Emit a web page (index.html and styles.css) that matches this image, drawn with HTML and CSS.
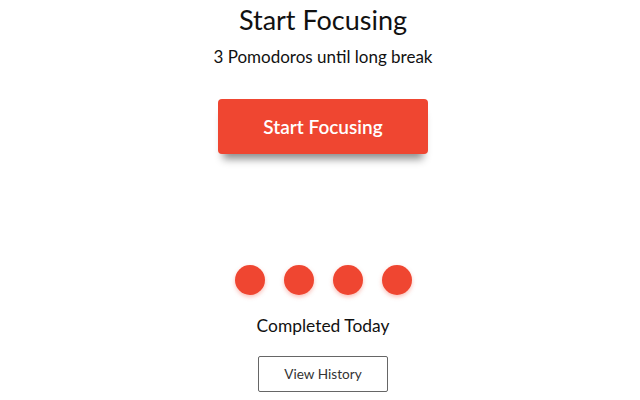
FILE: index.html
```html
<!DOCTYPE html>
<html>
<head>
<meta charset="utf-8">
<link rel="stylesheet" href="styles.css">
</head>
<body>
<main class="page">
  <h1 class="title">Start Focusing</h1>
  <p class="subtitle">3 Pomodoros until long break</p>
  <button class="primary">Start Focusing</button>
  <div class="dots">
    <span class="dot"></span>
    <span class="dot"></span>
    <span class="dot"></span>
    <span class="dot"></span>
  </div>
  <p class="completed">Completed Today</p>
  <button class="secondary">View History</button>
</main>
</body>
</html>
```
FILE: styles.css
```css
html, body {
  margin: 0;
  padding: 0;
  background: #fff;
}
body {
  font-family: "Lato", "Open Sans", sans-serif;
  color: #111;
}
.page {
  display: flex;
  flex-direction: column;
  align-items: center;
  width: 634px;
  height: 400px;
  padding-left: 6px;
  overflow: hidden;
}
.title {
  margin: 3px 0 0;
  font-size: 27px;
  font-weight: 400;
  line-height: 34px;
}
.subtitle {
  margin: 9px 0 0;
  font-size: 17px;
  line-height: 22px;
}
.primary {
  margin-top: 31px;
  width: 210px;
  height: 55px;
  border: none;
  border-radius: 4px;
  background: #ef4631;
  color: #fff;
  font-family: inherit;
  font-size: 19px;
  font-weight: 600;
  box-shadow: 0 10px 8px -5px rgba(0, 0, 0, 0.45);
}
.dots {
  display: flex;
  gap: 19px;
  margin-top: 111px;
}
.dot {
  width: 30px;
  height: 30px;
  border-radius: 50%;
  background: #ef4631;
  box-shadow: 0 2px 4px rgba(239, 70, 49, 0.35);
}
.completed {
  margin: 20px 0 0;
  font-size: 17.4px;
  line-height: 22px;
}
.secondary {
  margin-top: 19px;
  width: 130px;
  height: 36px;
  border: 1px solid #666;
  border-radius: 2px;
  background: #fff;
  color: #333;
  font-family: inherit;
  font-size: 13.6px;
}
```
